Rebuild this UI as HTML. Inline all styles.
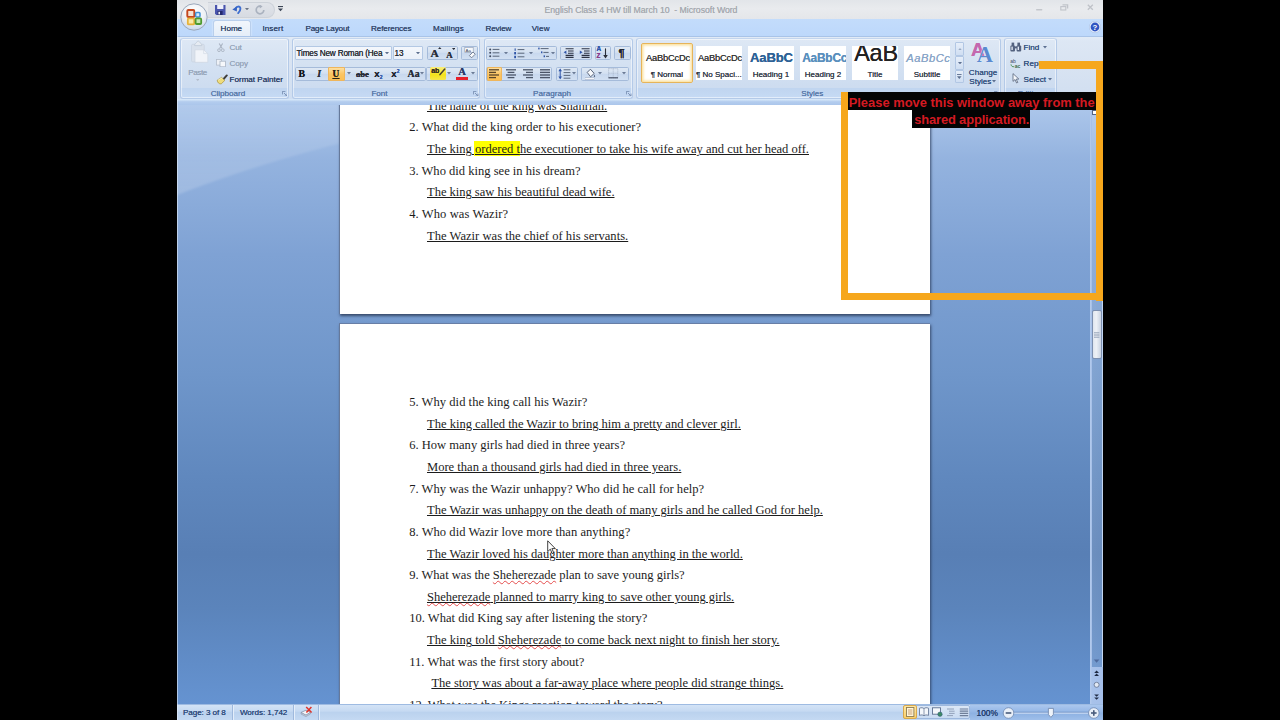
<!DOCTYPE html>
<html><head><meta charset="utf-8"><title>English Class 4 HW till March 10 - Microsoft Word</title>
<style>
*{box-sizing:border-box}
html,body{margin:0;padding:0}
body{width:1280px;height:720px;background:#000;position:relative;overflow:hidden;font-family:"Liberation Sans",sans-serif;font-size:8.1px;color:#3b5a82}
body div,body span,body svg{position:absolute}
body u,body b,body i,.tx span,.msg span,.t span{position:static}
.t{white-space:nowrap;line-height:10px;font-size:8.1px;color:#33507c;text-shadow:0 0 .35px currentColor}
.c{text-align:center}
.dis{color:#96a5ba}
.lbl{color:#5878a8}
.bg{border:1px solid #a5bbda;border-radius:1.6px;background:linear-gradient(#dfe8f4,#d3e0f1 45%,#c8d8ee 50%,#d2e0f2)}
.grp{border:1px solid #b4cae8;border-top-color:#c3d5ee;border-radius:3px;box-shadow:inset 0 0 0 1px rgba(255,255,255,.5)}
.tile{background:#fff;overflow:hidden}
.page{background:#fff;box-shadow:1px 1.5px 2.5px rgba(45,60,90,.85)}
.tx{font-family:"Liberation Serif",serif;font-size:12.55px;color:#1c1c1c;white-space:nowrap;line-height:15px}
.tx u{text-decoration-thickness:1px;text-underline-offset:.7px}
.hl{background:linear-gradient(#ff0,#ff0) no-repeat 0 0/100% 14.9px;padding:1.4px 0 0 1px;margin-left:-1px}
.sq{text-decoration:underline wavy rgba(226,50,50,.85) 0.6px;text-underline-offset:1.2px}

#tab0{letter-spacing:-0.023px}
#tab1{letter-spacing:0.108px}
#tab2{letter-spacing:-0.124px}
#tab3{letter-spacing:-0.099px}
#tab4{letter-spacing:0.151px}
#tab5{letter-spacing:-0.108px}
#tab6{letter-spacing:0.174px}
#sb0{letter-spacing:-0.072px}
#sb1{letter-spacing:-0.049px}
#rb0{letter-spacing:-0.134px}
#rb1{letter-spacing:-0.127px}
#rb2{letter-spacing:-0.002px}
#rb3{letter-spacing:-0.177px}
#L0{letter-spacing:-0.019px}
#L1{letter-spacing:0.042px}
#L2{letter-spacing:-0.009px}
#L3{letter-spacing:0.002px}
#L4{letter-spacing:-0.027px}
#L5{letter-spacing:0.095px}
#L6{letter-spacing:0.027px}
#L7{letter-spacing:0.037px}
#L8{letter-spacing:-0.003px}
#L9{letter-spacing:0.003px}
#L10{letter-spacing:-0.001px}
#L11{letter-spacing:0.035px}
#L12{letter-spacing:0.008px}
#L13{letter-spacing:0.040px}
#L14{letter-spacing:0.005px}
#L15{letter-spacing:-0.006px}
#L16{letter-spacing:-0.013px}
#L17{letter-spacing:0.009px}
#L18{letter-spacing:0.005px}
#L19{letter-spacing:0.020px}
#L20{letter-spacing:-0.016px}
#L21{letter-spacing:-0.006px}
#m0{letter-spacing:0.008px}
#m1{letter-spacing:-0.131px}
#ttl{letter-spacing:-0.044px}
#rb4{letter-spacing:-0.379px}

</style></head><body>
<div style="left:177px;top:0px;width:926px;height:720px;background:#bfdbff"></div>
<div style="left:177px;top:0px;width:926px;height:19px;background:linear-gradient(#e2e5e9,#e9ebee 45%,#e4e6ea 100%)"></div>
<div style="left:208px;top:2px;width:67px;height:15.5px;border-radius:0 8px 8px 0;background:linear-gradient(#e1e4e9,#d7dbe2);border:1px solid #cdd2d9;border-left:none"></div>
<svg style="left:215px;top:4.5px;" width="10.5" height="10" viewBox="0 0 10.5 10"><path d="M0 0H10.5V10H1.2L0 8.8Z" fill="#4a55ad"/><rect x="2.2" y="0" width="6.2" height="4" fill="#eef0fa"/><rect x="2.6" y="6" width="5" height="4" fill="#23296e"/><rect x="3.4" y="6.8" width="1.6" height="2.6" fill="#e8eaf6"/></svg>
<svg style="left:231.5px;top:4.2px;" width="10" height="10" viewBox="0 0 10 10"><path d="M3.4 5C4.2 2 8.4 1.6 8.4 4.8 8.4 6.8 7.4 8 6.2 9.2" fill="none" stroke="#3f6fd0" stroke-width="1.9" stroke-linecap="round"/><path d="M.3 5.4 5 2.6 4.8 7.6Z" fill="#3563c4"/></svg>
<svg style="left:244.8px;top:7.8px;" width="4" height="2.4" viewBox="0 0 5 3"><path d="M0 0H5L2.5 3Z" fill="#6a7486"/></svg>
<svg style="left:255px;top:4.5px;" width="10" height="10" viewBox="0 0 10 10"><path d="M5 1.2A3.8 3.8 0 1 0 8.8 5" fill="none" stroke="#aab2bf" stroke-width="1.7"/><path d="M4.6 -.6 7.6 1.4 4.8 3.4Z" fill="#aab2bf"/></svg>
<svg style="left:278.2px;top:6px;" width="5" height="5.5" viewBox="0 0 5 5.5"><rect x="0" y="0" width="5" height="1.1" fill="#3c4656"/><path d="M0 2.4H5L2.5 5.2Z" fill="#3c4656"/></svg>
<span class="t" id="ttl" style="left:544.5px;top:4.8px;font-size:8.72px;color:#a7abb1;white-space:pre">English Class 4 HW till March 10  - Microsoft Word</span>
<svg style="left:1036px;top:8.8px;" width="7" height="3" viewBox="0 0 7 3"><rect x="0" y="0" width="6.4" height="1.5" rx=".7" fill="#c3c6cb"/></svg>
<svg style="left:1060px;top:4px;" width="9" height="7" viewBox="0 0 9 7"><path d="M2.5 .8H7.6V4.4" fill="none" stroke="#c0c3c9" stroke-width="1.3"/><rect x=".8" y="2.6" width="5" height="3.4" fill="none" stroke="#c0c3c9" stroke-width="1.1"/></svg>
<svg style="left:1087px;top:4.4px;" width="7" height="7" viewBox="0 0 7 7"><path d="M.8 .8 5.8 5.8M5.8 .8 .8 5.8" stroke="#bfc2c8" stroke-width="1.3" fill="none"/></svg>
<div style="left:177px;top:18.6px;width:926px;height:17.4px;background:linear-gradient(#c3dcfb,#bdd8fb)"></div>
<div style="left:212.5px;top:19.8px;width:38.5px;height:17px;background:linear-gradient(#f1f6fc,#e4edf8);border:1px solid #b9cfec;border-bottom:none;border-radius:3px 3px 0 0;box-shadow:0 0 2px rgba(255,255,255,.8)"></div>
<span class="t tab" id="tab0" style="left:220.6px;top:24.1px;color:#34486c">Home</span>
<span class="t tab" id="tab1" style="left:262.4px;top:24.1px;color:#34486c">Insert</span>
<span class="t tab" id="tab2" style="left:305.4px;top:24.1px;color:#34486c">Page Layout</span>
<span class="t tab" id="tab3" style="left:371px;top:24.1px;color:#34486c">References</span>
<span class="t tab" id="tab4" style="left:433px;top:24.1px;color:#34486c">Mailings</span>
<span class="t tab" id="tab5" style="left:485.4px;top:24.1px;color:#34486c">Review</span>
<span class="t tab" id="tab6" style="left:531.7px;top:24.1px;color:#34486c">View</span>
<svg style="left:1089px;top:21px;" width="12" height="12" viewBox="0 0 12 12"><circle cx="6" cy="6" r="5.7" fill="#e9f0fb" stroke="#a9bfe2" stroke-width=".6"/><circle cx="6" cy="6" r="4.4" fill="#2f55c2"/><text x="6" y="8.8" font-size="7.8" font-weight="bold" font-family="Liberation Sans,sans-serif" text-anchor="middle" fill="#fff">?</text></svg>
<svg style="left:178.5px;top:1.5px;" width="30" height="30" viewBox="0 0 30 30"><defs><radialGradient id="ob" cx=".5" cy=".3" r=".75"><stop offset="0" stop-color="#ffffff"/><stop offset=".55" stop-color="#eef1f5"/><stop offset="1" stop-color="#c4d3e8"/></radialGradient></defs>
<circle cx="15" cy="15" r="13.2" fill="url(#ob)" stroke="#9aa7ba" stroke-width="1"/>
<rect x="8.3" y="8" width="7" height="7" rx="1" fill="#f6e2d4" stroke="#c4471f" stroke-width="1.9"/>
<rect x="16.6" y="10.6" width="4.4" height="4.4" rx="1" fill="#d6ecfb" stroke="#3e8fd6" stroke-width="1.5"/>
<rect x="8.8" y="16.4" width="6.4" height="6" rx="1" fill="#fbe9a8" stroke="#e6b23a" stroke-width="1.8"/>
<rect x="16.6" y="16.4" width="5.6" height="5.6" rx="1" fill="#c6e6b0" stroke="#4f9a2f" stroke-width="1.8"/></svg>
<div style="left:177px;top:704px;width:926px;height:16px;background:linear-gradient(#d3e3f6,#c6daf2 40%,#bbd2ee 50%,#c4d9f2);border-top:1px solid #9ebbe2"></div>
<div style="left:970px;top:704.5px;width:133px;height:15.5px;background:linear-gradient(#abc7ee,#95b7e6 45%,#8db1e2 55%,#9fbfea)"></div>
<span class="t" id="sb0" style="left:183px;top:707.8px;color:#2f4c7c">Page: 3 of 8</span>
<span class="t" id="sb1" style="left:239.9px;top:707.8px;color:#2f4c7c">Words: 1,742</span>
<div style="left:232px;top:705px;width:2px;height:15px;background:linear-gradient(90deg,#9fb9dd 50%,#e4eefa 50%)"></div>
<div style="left:293.2px;top:705px;width:2px;height:15px;background:linear-gradient(90deg,#9fb9dd 50%,#e4eefa 50%)"></div>
<div style="left:318.2px;top:705px;width:2px;height:15px;background:linear-gradient(90deg,#9fb9dd 50%,#e4eefa 50%)"></div>
<svg style="left:299.5px;top:706px;" width="13" height="12" viewBox="0 0 13 12"><path d="M1 6.5 6 4.2 10.5 6.3 6 9.2Z" fill="#f4f6fa" stroke="#7c8aa3" stroke-width=".7"/><path d="M1 6.5V8L6 10.6 10.5 7.8V6.3L6 9.2Z" fill="#c8d0de" stroke="#7c8aa3" stroke-width=".5"/><path d="M6.2 1 11.6 6.6M11.4 1 6.4 6.6" stroke="#e0342a" stroke-width="1.5"/></svg>
<div style="left:903.4px;top:705.2px;width:66.6px;height:14.3px;background:linear-gradient(#dbe7f6,#c9dbf2);border:1px solid #9db8de;border-radius:2px"></div>
<div style="left:903.4px;top:705.2px;width:14.1px;height:14.3px;background:linear-gradient(#fde8a4,#f9cf6a);border:1px solid #d9a84c;border-radius:2px"></div>
<svg style="left:906.3px;top:707.3px;" width="8.4" height="10" viewBox="0 0 8.4 10"><rect x=".5" y=".5" width="7.4" height="9" fill="#fff7dc" stroke="#8d7a52" stroke-width=".9"/><path d="M2 3H6.4M2 5H6.4M2 7H6.4" stroke="#c08a55" stroke-width=".8"/></svg>
<svg style="left:918.8px;top:707.3px;" width="10" height="10" viewBox="0 0 10 10"><path d="M.5 1.2C2.5 .4 3.8 .6 5 1.6 6.2 .6 7.5 .4 9.5 1.2V8.4C7.5 7.6 6.2 7.8 5 8.8 3.8 7.8 2.5 7.6 .5 8.4Z" fill="#f4f7fb" stroke="#5c6f8f" stroke-width=".8"/><path d="M5 1.6V8.8" stroke="#5c6f8f" stroke-width=".7"/></svg>
<svg style="left:932px;top:707.3px;" width="10.5" height="10" viewBox="0 0 10.5 10"><rect x=".5" y=".8" width="8" height="6.4" fill="#f4f7fb" stroke="#5c6f8f" stroke-width=".9"/><circle cx="8" cy="7.2" r="2.2" fill="#3f8a64" stroke="#2c5a7a" stroke-width=".5"/></svg>
<svg style="left:945.5px;top:707.3px;" width="10" height="10" viewBox="0 0 10 10"><path d="M1 2H8M3 4.2H8.6M3 6.4H8.6M1 8.6H7" stroke="#8b9ab3" stroke-width=".9"/></svg>
<svg style="left:958.5px;top:707.3px;" width="10" height="10" viewBox="0 0 10 10"><path d="M.8 2H9.2M.8 4.2H9.2M.8 6.4H9.2M.8 8.6H9.2" stroke="#6f7f99" stroke-width="1.2"/></svg>
<span class="t" style="left:976.5px;top:707.9px;color:#243e6e;font-size:8.4px">100%</span>
<svg style="left:1001.5px;top:705.5px;" width="100" height="14" viewBox="0 0 100 14"><path d="M12 7H86" stroke="#e8f0fb" stroke-width="1"/><path d="M12 6.2H86" stroke="#5f82b8" stroke-width=".6"/>
<circle cx="6.5" cy="7" r="5.3" fill="#e9eff8" stroke="#7089b0" stroke-width=".8"/><rect x="3.7" y="6.2" width="5.6" height="1.6" fill="#4a5c7c"/>
<circle cx="91.8" cy="7" r="5.3" fill="#e9eff8" stroke="#7089b0" stroke-width=".8"/><rect x="89" y="6.2" width="5.6" height="1.6" fill="#4a5c7c"/><rect x="91" y="4.2" width="1.6" height="5.6" fill="#4a5c7c"/>
<path d="M46.4 2.4H51.4V8.4L48.9 11.4 46.4 8.4Z" fill="#eef3fa" stroke="#6d84aa" stroke-width=".8"/></svg>
<div style="left:177px;top:35.6px;width:926px;height:65.6px;background:linear-gradient(#e2ebf6 0,#dde7f4 4px,#d8e3f2 30px,#d3e0f1 52px,#cfdef2 100%);border-top:1px solid #a9c4e8"></div>
<div style="left:177px;top:99px;width:926px;height:6px;background:linear-gradient(#d2e3f6 0,#d8e9fb 1px,#bcd3f0 1.8px,#b3ccee 50%,#abc6eb 100%)"></div>
<div class="grp" style="left:180px;top:38px;width:108.6px;height:60.5px;background:linear-gradient(#dee8f5 0,#d5e2f2 22px,#cddcf0 48.5px,#c0d5f0 49.5px,#c6daf4 100%)"></div>
<span class="t lbl c" style="left:168px;width:120px;top:89.1px;">Clipboard</span>
<div class="grp" style="left:291.6px;top:38px;width:188.8px;height:60.5px;background:linear-gradient(#dee8f5 0,#d5e2f2 22px,#cddcf0 48.5px,#c0d5f0 49.5px,#c6daf4 100%)"></div>
<span class="t lbl c" style="left:319.5px;width:120px;top:89.1px;">Font</span>
<div class="grp" style="left:483.6px;top:38px;width:149.6px;height:60.5px;background:linear-gradient(#dee8f5 0,#d5e2f2 22px,#cddcf0 48.5px,#c0d5f0 49.5px,#c6daf4 100%)"></div>
<span class="t lbl c" style="left:492px;width:120px;top:89.1px;">Paragraph</span>
<div class="grp" style="left:636.4px;top:38px;width:364.6px;height:60.5px;background:linear-gradient(#dee8f5 0,#d5e2f2 22px,#cddcf0 48.5px,#c0d5f0 49.5px,#c6daf4 100%)"></div>
<span class="t lbl c" style="left:752.3px;width:120px;top:89.1px;">Styles</span>
<div class="grp" style="left:1004px;top:38px;width:53px;height:60.5px;background:linear-gradient(#dee8f5 0,#d5e2f2 22px,#cddcf0 48.5px,#c0d5f0 49.5px,#c6daf4 100%)"></div>
<span class="t lbl c" style="left:970px;width:120px;top:89.1px;">Editing</span>
<svg style="left:281.5px;top:90.5px;" width="5.5" height="5.5" viewBox="0 0 5.5 5.5"><path d="M.4 3.4V.4H3.4" fill="none" stroke="#6c83a8" stroke-width=".8"/><path d="M2 2 4.6 4.6M5 2.6V5H2.6" fill="none" stroke="#6c83a8" stroke-width=".8"/></svg>
<svg style="left:473.3px;top:90.5px;" width="5.5" height="5.5" viewBox="0 0 5.5 5.5"><path d="M.4 3.4V.4H3.4" fill="none" stroke="#6c83a8" stroke-width=".8"/><path d="M2 2 4.6 4.6M5 2.6V5H2.6" fill="none" stroke="#6c83a8" stroke-width=".8"/></svg>
<svg style="left:626px;top:90.5px;" width="5.5" height="5.5" viewBox="0 0 5.5 5.5"><path d="M.4 3.4V.4H3.4" fill="none" stroke="#6c83a8" stroke-width=".8"/><path d="M2 2 4.6 4.6M5 2.6V5H2.6" fill="none" stroke="#6c83a8" stroke-width=".8"/></svg>
<svg style="left:993.5px;top:90.5px;" width="5.5" height="5.5" viewBox="0 0 5.5 5.5"><path d="M.4 3.4V.4H3.4" fill="none" stroke="#6c83a8" stroke-width=".8"/><path d="M2 2 4.6 4.6M5 2.6V5H2.6" fill="none" stroke="#6c83a8" stroke-width=".8"/></svg>
<svg style="left:189px;top:40px;" width="20" height="24" viewBox="0 0 20 24"><rect x="2.5" y="4.3" width="12.8" height="17.6" rx="1.2" fill="#d9e1ec" stroke="#c9d3e1" stroke-width=".7"/>
<path d="M5.6 5.6C5.6 3.4 6.8 3.6 7.6 2.4 8.2 .6 10.2 .6 10.8 2.4 11.6 3.6 12.8 3.4 12.8 5.6Z" fill="#e6ebf2" stroke="#bcc7d6" stroke-width=".7"/>
<path d="M6 9.8H14.6L18.8 13.6V22.3H6Z" fill="#f1f4f9" stroke="#cfd7e3" stroke-width=".7"/><path d="M14.6 9.8V13.6H18.8" fill="none" stroke="#cfd7e3" stroke-width=".6"/></svg>
<span class="t dis" id="rb4" style="left:188.2px;top:67.7px">Paste</span>
<svg style="left:195.85px;top:79.25px;" width="3.5" height="2.1" viewBox="0 0 5 3"><path d="M0 0H5L2.5 3Z" fill="#b3bccb"/></svg>
<svg style="left:216.8px;top:42.6px;" width="8" height="9.4" viewBox="0 0 8 9.4"><path d="M2.2 .4 5.2 5.6M5.6 .4 2.6 5.6" stroke="#a9b3c2" stroke-width="1.1" fill="none"/><circle cx="2" cy="7.2" r="1.4" fill="none" stroke="#a9b3c2" stroke-width=".9"/><circle cx="5.8" cy="7.2" r="1.4" fill="none" stroke="#a9b3c2" stroke-width=".9"/></svg>
<span class="t dis" id="rb0" style="left:229.5px;top:42.6px">Cut</span>
<svg style="left:215.8px;top:58.6px;" width="10.4" height="8.4" viewBox="0 0 10.4 8.4"><rect x=".5" y=".5" width="5" height="5.6" fill="#eef1f6" stroke="#b4bdcb" stroke-width=".8"/><rect x="4" y="2.2" width="5.6" height="5.6" fill="#f6f8fb" stroke="#aab5c5" stroke-width=".8"/></svg>
<span class="t dis" id="rb1" style="left:229.5px;top:58.9px">Copy</span>
<svg style="left:215.5px;top:73.5px;" width="12" height="11" viewBox="0 0 12 11"><path d="M7.6 5 10.8 1.4" stroke="#3f3d3a" stroke-width="1.9" stroke-linecap="round"/><path d="M1.2 6.2 5.6 3.4 8.8 6.4 5.2 9.9C3.2 10.2 1.4 8.6 1.2 6.2Z" fill="#eedc7c" stroke="#a8923c" stroke-width=".7"/><path d="M2 6.2 5.4 4.2 6.6 5.4" fill="none" stroke="#fbf4c8" stroke-width=".8"/></svg>
<span class="t" id="rb2" style="left:229.5px;top:74.5px;color:#2f4166">Format Painter</span>
<div style="left:294.7px;top:45.7px;width:97.3px;height:14.5px;background:linear-gradient(#f4f7fc,#eaf0f9);border:1px solid #b3c8e4;border-radius:1px"></div>
<span class="t" id="rb3" style="left:296.5px;top:48.6px;color:#2b2f36;font-size:8.2px">Times New Roman (Hea</span>
<svg style="left:385.2px;top:51.6px;" width="4" height="2.4" viewBox="0 0 5 3"><path d="M0 0H5L2.5 3Z" fill="#5d7090"/></svg>
<div style="left:392.8px;top:45.7px;width:30.6px;height:14.5px;background:linear-gradient(#f4f7fc,#eaf0f9);border:1px solid #b3c8e4;border-radius:1px"></div>
<span class="t" style="left:394.5px;top:48.7px;color:#2b2f36;font-size:8.2px">13</span>
<svg style="left:416.2px;top:51.6px;" width="4" height="2.4" viewBox="0 0 5 3"><path d="M0 0H5L2.5 3Z" fill="#5d7090"/></svg>
<div class="bg" style="left:426.7px;top:45.7px;width:31.2px;height:14.5px;"></div>
<span class="t" style="left:430.4px;top:46px;font:bold 11.4px/14px 'Liberation Serif',serif;color:#2a2f3a">A</span>
<svg style="left:438.45px;top:47.35px;" width="3.5" height="2.1" viewBox="0 0 5 3"><path d="M0 3H5L2.5 0Z" fill="#2a2f3a"/></svg>
<span class="t" style="left:446.3px;top:47.6px;font:bold 8.8px/14px 'Liberation Serif',serif;color:#2a2f3a">A</span>
<svg style="left:451.85px;top:47.55px;" width="3.5" height="2.1" viewBox="0 0 5 3"><path d="M0 0H5L2.5 3Z" fill="#2a2f3a"/></svg>
<div class="bg" style="left:460.7px;top:45.7px;width:17px;height:14.5px;"></div>
<svg style="left:463.5px;top:47px;" width="12" height="12" viewBox="0 0 12 12"><rect x=".8" y=".6" width="8.4" height="4.8" fill="#f6f8fb" stroke="#8d9bb2" stroke-width=".6"/><text x="1.6" y="4.6" font-size="4.4" font-family="Liberation Sans,sans-serif" fill="#3a4358">Aa</text><path d="M5.4 8.6 9 5 11.2 7.2 7.6 10.8Z" fill="#fafbfd" stroke="#5f6c84" stroke-width=".8"/></svg>
<div class="bg" style="left:294.7px;top:66.6px;width:131.7px;height:14.4px;"></div>
<div style="left:327.6px;top:66.6px;width:17.2px;height:14.4px;background:linear-gradient(#fddfa0,#fbc564 50%,#fbbf55);border:1px solid #efb65c;border-radius:1px"></div>
<span class="t" style="left:298.6px;top:67px;font:bold 9.8px/14px 'Liberation Serif',serif;color:#14161c">B</span>
<span class="t" style="left:317.2px;top:67px;font:italic bold 9.8px/14px 'Liberation Serif',serif;color:#2a2f3a">I</span>
<span class="t" style="left:332.6px;top:66.8px;font:bold 9.4px/14px 'Liberation Serif',serif;color:#2a2418;text-decoration:underline">U</span>
<svg style="left:346.8px;top:72.4px;" width="4" height="2.4" viewBox="0 0 5 3"><path d="M0 0H5L2.5 3Z" fill="#6b7b96"/></svg>
<span class="t" style="left:356px;top:67px;font:bold 8.6px/14px 'Liberation Serif',serif;color:#2a2f3a;text-decoration:line-through;text-decoration-thickness:.7px">abe</span>
<span class="t" style="left:374.3px;top:67px;font:bold 9.6px/14px 'Liberation Sans',sans-serif;color:#1d2230">x<span style="font-size:5px;line-height:1px;color:#2f55a8;position:relative;top:1.6px">2</span></span>
<span class="t" style="left:391.3px;top:67px;font:bold 9.6px/14px 'Liberation Sans',sans-serif;color:#1d2230">x<span style="font-size:5px;line-height:1px;color:#2f55a8;position:relative;top:-3.6px">2</span></span>
<span class="t" style="left:407.6px;top:67px;font:bold 9.8px/14px 'Liberation Serif',serif;color:#2a2f3a">Aa</span>
<svg style="left:420px;top:72.4px;" width="4" height="2.4" viewBox="0 0 5 3"><path d="M0 0H5L2.5 3Z" fill="#6b7b96"/></svg>
<div class="bg" style="left:426.4px;top:66.6px;width:51.2px;height:14.4px;"></div>
<div style="left:429.6px;top:67.2px;width:16.6px;height:13.2px;background:linear-gradient(#f9ee7c,#f4e21a 60%,#f6e64a);border-radius:1.5px"></div>
<span class="t" style="left:431.2px;top:65.6px;font:bold 7px/10px 'Liberation Sans',sans-serif;color:#3a3420">ab</span>
<svg style="left:438.6px;top:67.6px;" width="7" height="8" viewBox="0 0 7 8"><path d="M1 6.6 5.8 1" stroke="#4a4230" stroke-width="1.5" stroke-linecap="round"/></svg>
<svg style="left:447.3px;top:72.4px;" width="4" height="2.4" viewBox="0 0 5 3"><path d="M0 0H5L2.5 3Z" fill="#6b7b96"/></svg>
<span class="t" style="left:458.2px;top:65.2px;font:bold 10.6px/14px 'Liberation Serif',serif;color:#2a3a6a">A</span>
<div style="left:456px;top:77px;width:12px;height:2.8px;background:#e8202a"></div>
<svg style="left:471.3px;top:72.4px;" width="4" height="2.4" viewBox="0 0 5 3"><path d="M0 0H5L2.5 3Z" fill="#6b7b96"/></svg>
<div class="bg" style="left:486.4px;top:45.7px;width:70.4px;height:14.5px;"></div>
<svg style="left:489.4px;top:48px;" width="11" height="10" viewBox="0 0 11 10"><g fill="#3f4a60"><circle cx="1.2" cy="1.4" r="1"/><circle cx="1.2" cy="4.8" r="1"/><circle cx="1.2" cy="8.2" r="1"/></g><path d="M3.6 1.4H10.4M3.6 4.8H10.4M3.6 8.2H10.4" stroke="#596579" stroke-width="1"/></svg>
<svg style="left:503.8px;top:51.6px;" width="4" height="2.4" viewBox="0 0 5 3"><path d="M0 0H5L2.5 3Z" fill="#6b7b96"/></svg>
<svg style="left:513.6px;top:47.6px;" width="11" height="11" viewBox="0 0 11 11"><g fill="#2f55a8"><rect x=".6" y=".4" width="1.1" height="2.4"/><rect x=".2" y="4" width="1.8" height="2.4"/><rect x=".2" y="7.8" width="1.8" height="2.4"/></g><path d="M3.6 1.6H10.4M3.6 5.2H10.4M3.6 8.8H10.4" stroke="#596579" stroke-width="1"/></svg>
<svg style="left:528.8px;top:51.6px;" width="4" height="2.4" viewBox="0 0 5 3"><path d="M0 0H5L2.5 3Z" fill="#6b7b96"/></svg>
<svg style="left:538px;top:47.4px;" width="12" height="12" viewBox="0 0 12 12"><g fill="#2f55a8"><rect x=".2" y=".6" width="1.4" height="1.8"/><rect x="3" y="4.4" width="1.4" height="1.8"/><rect x="5.6" y="8.4" width="1.4" height="1.8"/></g><path d="M2.6 1.6H10.6M5.4 5.4H10.6M8 9.4H11" stroke="#596579" stroke-width="1"/></svg>
<svg style="left:551px;top:51.6px;" width="4" height="2.4" viewBox="0 0 5 3"><path d="M0 0H5L2.5 3Z" fill="#6b7b96"/></svg>
<div class="bg" style="left:560px;top:45.7px;width:31.8px;height:14.5px;"></div>
<svg style="left:563px;top:47.8px;" width="11" height="10" viewBox="0 0 11 10"><path d="M2.6 .8H10.6M5 3H10.6M5 5.2H10.6M2.6 7.4H10.6M2.6 9.4H10.6" stroke="#2c3344" stroke-width="1.1"/><path d="M3.4 2.4V6L.6 4.2Z" fill="#2f55a8"/></svg>
<svg style="left:579px;top:47.8px;" width="11" height="10" viewBox="0 0 11 10"><path d="M2.6 .8H10.6M5 3H10.6M5 5.2H10.6M2.6 7.4H10.6M2.6 9.4H10.6" stroke="#2c3344" stroke-width="1.1"/><path d="M.8 2.4V6L3.6 4.2Z" fill="#2f55a8"/></svg>
<div class="bg" style="left:594.6px;top:45.7px;width:16.9px;height:14.5px;"></div>
<span class="t" style="left:596.6px;top:46.2px;font:bold 6.4px/6.6px 'Liberation Sans',sans-serif;color:#2f55a8">A<br><span style="color:#8a3a8a">Z</span></span>
<svg style="left:603.4px;top:47.6px;" width="5" height="11" viewBox="0 0 5 11"><path d="M2.5 .4V8" stroke="#2a2f3a" stroke-width="1.1"/><path d="M.2 7 2.5 10.6 4.8 7Z" fill="#2a2f3a"/></svg>
<div class="bg" style="left:614.4px;top:45.7px;width:16.4px;height:14.5px;"></div>
<span class="t" style="left:618.6px;top:46px;font:bold 11px/14px 'Liberation Sans',sans-serif;color:#20242e">¶</span>
<div class="bg" style="left:486.4px;top:66.6px;width:66px;height:14.4px;"></div>
<div style="left:486.6px;top:66.6px;width:15.8px;height:14.4px;background:linear-gradient(#fddfa0,#fbc564 50%,#fbbf55);border:1px solid #efb65c;border-radius:1px"></div>
<svg style="left:489.4px;top:68.6px;" width="10" height="11.4" viewBox="0 0 10 11.4"><path d="M0 0.8H10" stroke="#5a452a" stroke-width="1.3"/><path d="M0 3.4H7" stroke="#5a452a" stroke-width="1.3"/><path d="M0 6H10" stroke="#5a452a" stroke-width="1.3"/><path d="M0 8.6H7" stroke="#5a452a" stroke-width="1.3"/></svg>
<svg style="left:505.8px;top:68.6px;" width="10" height="11.4" viewBox="0 0 10 11.4"><path d="M0 0.8H10" stroke="#4b5568" stroke-width="1.3"/><path d="M1.6 3.4H8.4" stroke="#4b5568" stroke-width="1.3"/><path d="M0 6H10" stroke="#4b5568" stroke-width="1.3"/><path d="M1.6 8.6H8.4" stroke="#4b5568" stroke-width="1.3"/></svg>
<svg style="left:523.2px;top:68.6px;" width="10" height="11.4" viewBox="0 0 10 11.4"><path d="M0 0.8H10" stroke="#4b5568" stroke-width="1.3"/><path d="M3 3.4H10" stroke="#4b5568" stroke-width="1.3"/><path d="M0 6H10" stroke="#4b5568" stroke-width="1.3"/><path d="M3 8.6H10" stroke="#4b5568" stroke-width="1.3"/></svg>
<svg style="left:540px;top:68.6px;" width="10" height="11.4" viewBox="0 0 10 11.4"><path d="M0 0.8H10" stroke="#4b5568" stroke-width="1.4"/><path d="M0 3.4H10" stroke="#4b5568" stroke-width="1.4"/><path d="M0 6H10" stroke="#4b5568" stroke-width="1.4"/><path d="M0 8.6H10" stroke="#4b5568" stroke-width="1.4"/></svg>
<div class="bg" style="left:555.8px;top:66.6px;width:22.4px;height:14.4px;"></div>
<svg style="left:558.4px;top:68px;" width="13" height="12" viewBox="0 0 13 12"><path d="M2.2 1.4V10.4" stroke="#2f55a8" stroke-width="1"/><path d="M.4 3.2 2.2 .6 4 3.2ZM.4 8.6 2.2 11.2 4 8.6Z" fill="#2f55a8"/><path d="M5.6 1.8H12.4M5.6 4.6H12.4M5.6 7.4H12.4M5.6 10.2H12.4" stroke="#5b677c" stroke-width="1"/></svg>
<svg style="left:571.8px;top:72.4px;" width="4" height="2.4" viewBox="0 0 5 3"><path d="M0 0H5L2.5 3Z" fill="#6b7b96"/></svg>
<div class="bg" style="left:581.4px;top:66.6px;width:47.6px;height:14.4px;"></div>
<svg style="left:584.4px;top:67.6px;" width="12" height="12" viewBox="0 0 12 12"><path d="M3.2 4.4 6.4 1.2 10.2 5.4 6.6 8.8Z" fill="#f7f9fc" stroke="#4d586e" stroke-width=".9"/><path d="M10.4 6.4C11.4 8 11.4 9 10.4 9.2 9.6 9 9.6 8 10.4 6.4Z" fill="#5b6b88"/><rect x="1.4" y="9.8" width="8.6" height="1.8" fill="#f4f6fa" stroke="#8b97ad" stroke-width=".4"/></svg>
<svg style="left:598.4px;top:72.4px;" width="4" height="2.4" viewBox="0 0 5 3"><path d="M0 0H5L2.5 3Z" fill="#6b7b96"/></svg>
<svg style="left:608.2px;top:68.2px;" width="10.4" height="10.4" viewBox="0 0 10.4 10.4"><rect x=".6" y=".6" width="9.2" height="9.2" fill="none" stroke="#9aa7bd" stroke-width=".7" stroke-dasharray="1 1"/><path d="M5.2 .6V9.8M.6 5.2H9.8" stroke="#9aa7bd" stroke-width=".7" stroke-dasharray="1 1"/><path d="M.4 9.8H10" stroke="#4a5468" stroke-width="1.2"/></svg>
<svg style="left:622.2px;top:72.4px;" width="4" height="2.4" viewBox="0 0 5 3"><path d="M0 0H5L2.5 3Z" fill="#6b7b96"/></svg>
<div style="left:640.6px;top:42.7px;width:52.3px;height:40.6px;background:#fff;border:1.8px solid #e6b45a;border-radius:2px;box-shadow:inset 0 0 2.5px 1.4px #fbe09a"></div>
<div class="tile" style="left:695.7px;top:45.6px;width:46.4px;height:34.7px;"></div>
<div class="tile" style="left:747.7px;top:45.6px;width:46.4px;height:34.7px;"></div>
<div class="tile" style="left:799.8px;top:45.6px;width:46.4px;height:34.7px;"></div>
<div class="tile" style="left:851.8px;top:45.6px;width:46.4px;height:34.7px;"></div>
<div class="tile" style="left:903.9px;top:45.6px;width:46.4px;height:34.7px;"></div>
<div style="left:643.7px;top:45.6px;width:46.4px;height:34.7px;overflow:hidden;background:none"><span class="t" style="left:2.4px;top:2.6px;line-height:20px;font-size:9.3px;font-weight:normal;font-style:normal;color:#3a3a3a;letter-spacing:-.2px">AaBbCcDc</span><span class="t c" style="left:-20px;width:86.4px;top:24px;color:#343b48;font-size:8px">¶ Normal</span></div>
<div style="left:695.7px;top:45.6px;width:46.4px;height:34.7px;overflow:hidden;background:none"><span class="t" style="left:2.4px;top:2.6px;line-height:20px;font-size:9.3px;font-weight:normal;font-style:normal;color:#3a3a3a;letter-spacing:-.2px">AaBbCcDc</span><span class="t c" style="left:-20px;width:86.4px;top:24px;color:#343b48;font-size:8px">¶ No Spaci...</span></div>
<div style="left:747.7px;top:45.6px;width:46.4px;height:34.7px;overflow:hidden;background:none"><span class="t" style="left:2.4px;top:2.6px;line-height:20px;font-size:13.1px;font-weight:bold;font-style:normal;color:#2e6296;letter-spacing:-.2px">AaBbC</span><span class="t c" style="left:-20px;width:86.4px;top:24px;color:#343b48;font-size:8px">Heading 1</span></div>
<div style="left:799.8px;top:45.6px;width:46.4px;height:34.7px;overflow:hidden;background:none"><span class="t" style="left:2.4px;top:2.6px;line-height:20px;font-size:11.9px;font-weight:bold;font-style:normal;color:#5a8fbd;letter-spacing:-.2px">AaBbCc</span><span class="t c" style="left:-20px;width:86.4px;top:24px;color:#343b48;font-size:8px">Heading 2</span></div>
<div style="left:851.8px;top:45.6px;width:46.4px;height:34.7px;overflow:hidden;background:none"><span class="t" style="left:2.4px;top:-2.2px;line-height:20px;font-size:23.4px;font-weight:normal;font-style:normal;color:#222;letter-spacing:-.2px">AaBb</span><span class="t c" style="left:-20px;width:86.4px;top:24px;color:#343b48;font-size:8px">Title</span></div>
<div style="left:903.9px;top:45.6px;width:46.4px;height:34.7px;overflow:hidden;background:none"><span class="t" style="left:2.4px;top:2.6px;line-height:20px;font-size:11.2px;font-weight:normal;font-style:italic;color:#8aa6c8;letter-spacing:.5px">AaBbCcD</span><span class="t c" style="left:-20px;width:86.4px;top:24px;color:#343b48;font-size:8px">Subtitle</span></div>
<div style="left:954.8px;top:42.2px;width:9.4px;height:13.6px;background:linear-gradient(#e6eef9,#cfdef2);border:1px solid #b2c7e4;border-radius:1px"></div>
<div style="left:954.8px;top:56px;width:9.4px;height:13.6px;background:linear-gradient(#e6eef9,#cfdef2);border:1px solid #b2c7e4;border-radius:1px"></div>
<div style="left:954.8px;top:69.8px;width:9.4px;height:13.6px;background:linear-gradient(#e6eef9,#cfdef2);border:1px solid #b2c7e4;border-radius:1px"></div>
<svg style="left:957.5px;top:47.8px;" width="4" height="2.4" viewBox="0 0 5 3"><path d="M0 3H5L2.5 0Z" fill="#98a8c0"/></svg>
<svg style="left:957.5px;top:61.8px;" width="4" height="2.4" viewBox="0 0 5 3"><path d="M0 0H5L2.5 3Z" fill="#5d7090"/></svg>
<svg style="left:957.2px;top:74.4px;" width="4.6" height="5.4" viewBox="0 0 4.6 5.4"><rect width="4.6" height=".9" fill="#5d7090"/><path d="M0 2.2H4.6L2.3 5Z" fill="#5d7090"/></svg>
<span class="t" style="left:971px;top:39.2px;font:bold 19px/22px 'Liberation Sans',sans-serif;color:#c468ae">A</span>
<span class="t" style="left:976.8px;top:42.8px;font:bold 22.5px/24px 'Liberation Serif',serif;color:#5a8ad0;text-shadow:0 0 1px #fff">A</span>
<span class="t c" style="left:923px;width:120px;top:67.7px;">Change</span>
<span class="t c" style="left:920.4px;width:120px;top:76.7px;">Styles</span>
<svg style="left:992px;top:80.4px;" width="4" height="2.4" viewBox="0 0 5 3"><path d="M0 0H5L2.5 3Z" fill="#5d7090"/></svg>
<svg style="left:1009.5px;top:42px;" width="12" height="10" viewBox="0 0 12 10"><g fill="#53627f"><rect x=".4" y="3.4" width="4.6" height="6" rx="1"/><rect x="6.6" y="3.4" width="4.6" height="6" rx="1"/><rect x="1.6" y=".6" width="2.6" height="3.4"/><rect x="7.4" y=".6" width="2.6" height="3.4"/><rect x="4.6" y="4.4" width="2.4" height="2"/></g><rect x="1.4" y="4.6" width="1.4" height="3.4" fill="#dfe6f2"/><rect x="7.6" y="4.6" width="1.4" height="3.4" fill="#dfe6f2"/></svg>
<span class="t" style="left:1023.6px;top:42.7px;">Find</span>
<svg style="left:1043.2px;top:46.2px;" width="4" height="2.4" viewBox="0 0 5 3"><path d="M0 0H5L2.5 3Z" fill="#5d7090"/></svg>
<svg style="left:1009.5px;top:58px;" width="12" height="10" viewBox="0 0 12 10"><text x=".2" y="4.6" font-size="5" font-family="Liberation Sans,sans-serif" fill="#3c4a66">ab</text><text x="4.8" y="9.6" font-size="5" font-family="Liberation Sans,sans-serif" fill="#3c6a4a" font-weight="bold">ac</text><path d="M1 6.4C1.4 8.6 2.6 9 4.2 8.6" stroke="#3c8a4a" fill="none" stroke-width=".9"/></svg>
<span class="t" style="left:1023.6px;top:58.7px;">Repl</span>
<svg style="left:1012px;top:73px;" width="8" height="11" viewBox="0 0 8 11"><path d="M1 .6V8.4L3 6.6 4.6 10 5.8 9.4 4.2 6.2 6.8 6Z" fill="#f6f8fb" stroke="#55627a" stroke-width=".8"/></svg>
<span class="t" style="left:1023.6px;top:74.7px;">Select</span>
<svg style="left:1048px;top:78.2px;" width="4" height="2.4" viewBox="0 0 5 3"><path d="M0 0H5L2.5 3Z" fill="#5d7090"/></svg>
<div id="doc" style="left:177px;top:105.4px;width:926px;height:598.6px;overflow:hidden;background:linear-gradient(#adc7eb 0,#94b3df 9%,#7fa2d4 25%,#6f96ca 45%,#6088be 62%,#587fb5 75%,#5b84bb 84%,#6593d1 100%)">
<svg style="left:0;top:0" width="926" height="120" viewBox="0 0 926 120"><defs><linearGradient id="gl" x1="0" y1="0" x2="0" y2="1"><stop offset="0" stop-color="#fff" stop-opacity=".04"/><stop offset="1" stop-color="#fff" stop-opacity=".17"/></linearGradient><filter id="bl"><feGaussianBlur stdDeviation="1"/></filter></defs><path d="M-5 -5H400V-10Q160 27.6 0 90L-5 92Z" fill="url(#gl)" filter="url(#bl)"/></svg>
<div class="page" style="left:162.4px;top:-300px;width:591px;height:508.29999999999995px;border-left:1px solid #66799a"></div>
<div class="page" style="left:162.4px;top:217.99999999999997px;width:591px;height:500px;border-left:1px solid #66799a;border-top:1px solid #687ea6"></div>
<div class="tx" id="L0" style="left:250px;top:-6.63px"><u>The name of the king was Shahriah.</u></div>
<div class="tx" id="L1" style="left:232.2px;top:15.07px">2. What did the king order to his executioner?</div>
<div class="tx" id="L2" style="left:250px;top:36.67px"><u>The king <span class="hl">ordered t</span>he executioner to take his wife away and cut her head off.</u></div>
<div class="tx" id="L3" style="left:232.2px;top:58.37px">3. Who did king see in his dream?</div>
<div class="tx" id="L4" style="left:250px;top:80.07px"><u>The king saw his beautiful dead wife.</u></div>
<div class="tx" id="L5" style="left:232.2px;top:101.67px">4. Who was Wazir?</div>
<div class="tx" id="L6" style="left:250px;top:123.37px"><u>The Wazir was the chief of his servants.</u></div>
<div class="tx" id="L7" style="left:232.2px;top:289.77px">5. Why did the king call his Wazir?</div>
<div class="tx" id="L8" style="left:250px;top:311.37px"><u>The king called the Wazir to bring him a pretty and clever girl.</u></div>
<div class="tx" id="L9" style="left:232.2px;top:333.07px">6. How many girls had died in three years?</div>
<div class="tx" id="L10" style="left:250px;top:354.67px"><u>More than a thousand girls had died in three years.</u></div>
<div class="tx" id="L11" style="left:232.2px;top:376.27px">7. Why was the Wazir unhappy? Who did he call for help?</div>
<div class="tx" id="L12" style="left:250px;top:397.87px"><u>The Wazir was unhappy on the death of many girls and he called God for help.</u></div>
<div class="tx" id="L13" style="left:232.2px;top:419.57px">8. Who did Wazir love more than anything?</div>
<div class="tx" id="L14" style="left:250px;top:441.17px"><u>The Wazir loved his daughter more than anything in the world.</u></div>
<div class="tx" id="L15" style="left:232.2px;top:462.77px">9. What was the <span class="sq">Sheherezade</span> plan to save young girls?</div>
<div class="tx" id="L16" style="left:250px;top:484.47px"><u><span class="sq">Sheherezade</span> planned to marry king to save other young girls.</u></div>
<div class="tx" id="L17" style="left:232.2px;top:506.07px">10. What did King say after listening the story?</div>
<div class="tx" id="L18" style="left:250px;top:527.67px"><u>The king told <span class="sq">Sheherezade</span> to come back next night to finish her story.</u></div>
<div class="tx" id="L19" style="left:232.2px;top:549.37px">11. What was the first story about?</div>
<div class="tx" id="L20" style="left:254.4px;top:570.97px"><u>The story was about a far-away place where people did strange things.</u></div>
<div class="tx" id="L21" style="left:232.2px;top:592.57px">12. What was the Kings reaction toward the story?</div>
<div style="left:913px;top:0;width:13px;height:598.6px;background:linear-gradient(90deg,#b7cdee 0,#a6c0e8 1.6px,rgba(255,255,255,.13) 2px,rgba(255,255,255,.10) 11.6px,#c3d6f1 12.2px)"></div>
<div style="left:913px;top:561.6px;width:13px;height:37px;background:linear-gradient(90deg,#b7cdee 0,#a8c2ea 2px,#a5bfe9 100%)"></div>
<div style="left:914.7px;top:205.1px;width:10.4px;height:49px;border:1px solid #7d90b0;border-radius:2px;background:linear-gradient(90deg,#dfe5ee,#eef1f6 40%,#c9d3e2)"></div>
<svg style="left:917.2px;top:226.6px" width="5.4" height="6" viewBox="0 0 5.4 6"><path d="M0 .6H5.4M0 2.2H5.4M0 3.8H5.4M0 5.4H5.4" stroke="#8a98b0" stroke-width=".7"/></svg>
<svg style="left:913px;top:548.6px" width="13" height="50" viewBox="0 0 13 50"><path d="M3.8 5.6H9.4L6.6 8.8Z" fill="#4f6b9e"/><path d="M4.2 19 6.6 16.6 9 19ZM4.2 22 6.6 19.6 9 22Z" fill="#1f2a42"/><circle cx="6.6" cy="30.8" r="2.5" fill="#e2e9f4" stroke="#55637f" stroke-width=".7"/><path d="M4.2 40.4 6.6 42.8 9 40.4ZM4.2 43.4 6.6 45.8 9 43.4Z" fill="#1f2a42"/></svg>
<div style="left:915px;top:5.099999999999994px;width:4.5px;height:4.8px;background:#fff;border:.6px solid #55637f"></div>
<div style="left:1092px;top:109.5px;width:0;height:0"></div>
</div>
<div style="left:177px;top:19px;width:1.4px;height:701px;background:rgba(235,243,252,.55)"></div>
<svg style="left:546.5px;top:540px;" width="9" height="15" viewBox="0 0 9 15"><path d="M.7 .8V11.6L3.3 9.2 5.2 13.6 6.8 12.9 4.9 8.6H8.3Z" fill="#fff" stroke="#111" stroke-width=".8" stroke-linejoin="round"/></svg>
<div style="left:1038.6px;top:61px;width:64.4px;height:7.7px;background:#f6a71c"></div>
<div style="left:1095.7px;top:61px;width:7.3px;height:239.5px;background:#f6a71c"></div>
<div style="left:840.5px;top:293px;width:262.5px;height:7.3px;background:#f6a71c"></div>
<div style="left:840.5px;top:92px;width:7.2px;height:208px;background:#f6a71c"></div>
<div style="left:847.7px;top:92px;width:248px;height:17.8px;background:#040404"></div>
<div style="left:912px;top:109px;width:118px;height:18.8px;background:#040404"></div>
<div class="msg" style="left:847.7px;top:93.5px;width:248px;height:36px;text-align:center;font:bold 12.9px/17.9px 'Liberation Sans',sans-serif;color:#d41a22;white-space:nowrap"><span id="m0">Please move this window away from the</span><br><span id="m1">shared application.</span></div>
</body></html>
